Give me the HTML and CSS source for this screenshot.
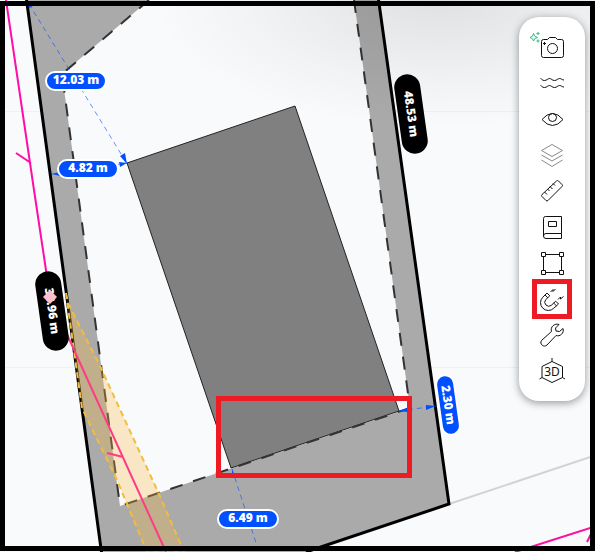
FILE: index.html
```html
<!DOCTYPE html>
<html lang="en">
<head>
  <meta charset="UTF-8">
  <meta name="viewport" content="width=device-width, initial-scale=1.0">
  <title>Site plan</title>
  <link rel="stylesheet" href="styles.css">
</head>
<body>

  <main class="viewer">
    <svg class="plan" viewBox="0 0 595 552" preserveAspectRatio="xMidYMid slice" role="img" aria-label="Plot plan">
      <!-- grid -->
      <path class="grid" d="M0 111.5H595M0 367.5H595"/>
      <path class="road" d="M449 504L595 455.5"/>

      <!-- plot and buildable area -->
      <path class="plot" d="M26 0H379L449 504L310 551L310 560H102Z"/>
      <path class="area" d="M149 0L62 74L120 506L410 408L354 0Z"/>
      <path class="setback" d="M149 0L62 74L120 506"/>
      <path class="setback" d="M354 0L410 408"/>
      <path class="building" d="M127 163L295 106L399 411L231 468Z"/>
      <path class="setback" d="M410 408L120 506"/>
      <path class="border" d="M26 -4L102 556M378 -4L449 504L306 552"/>

      <!-- easement -->
      <path class="easement" d="M66 293L76 365L82 408L117 480L147 552H184L159 494L100 366L68 303Z"/>
      <path class="pipe" d="M6 0L34 190L50 297M16 153L31 163M515 552L595 526.5M587 542L591 534"/>
      <path class="pipe pipe-in" d="M50 297L166 552M107 453L123 457"/>

      <!-- distances -->
      <path class="distance" d="M29 4L126 162M52 174L127 163M399 411L436 406M232 469L259 552"/>
      <path class="arrow" d="M127 164L120 156L125 153ZM127 163L119 162L120 167ZM52 174L60 172V176ZM399 411L407 408V412ZM436 406L426 405V410ZM232 469L232 478L235 478ZM28 3L29 8L33 6Z"/>

      <g class="tag" transform="translate(76 81)">
        <rect x="-30" y="-9" width="60" height="18" rx="9"/>
        <text y="3">12.03 m</text>
      </g>
      <g class="tag" transform="translate(88 169)">
        <rect x="-30" y="-9" width="60" height="18" rx="9"/>
        <text y="3">4.82 m</text>
      </g>
      <g class="tag" transform="translate(248 519)">
        <rect x="-30" y="-9" width="60" height="18" rx="9"/>
        <text y="3">6.49 m</text>
      </g>
      <g class="tag" transform="translate(448 405) rotate(82)">
        <rect x="-30" y="-9" width="60" height="18" rx="9"/>
        <text y="4">2.30 m</text>
      </g>
      <g class="tag tag-side" transform="translate(411 114) rotate(82)">
        <rect x="-40" y="-13" width="80" height="26" rx="13"/>
        <text y="4">48.53 m</text>
      </g>
      <g class="tag tag-side" transform="translate(52 311) rotate(82)">
        <rect x="-40" y="-13" width="80" height="26" rx="13"/>
        <text y="4">38.96 m</text>
      </g>
      <path class="marker" d="M50 290L57 297L50 304L43 297Z"/>

      <rect class="focus" x="218.5" y="398.5" width="191" height="77"/>
    </svg>

    <div class="shade"></div>

    <nav class="toolbar" aria-label="Tools">
      <button class="tool" type="button" aria-label="Snapshot">
        <svg viewBox="0 0 24 24">
          <path d="M3.5 4.5H7.5L9.5 2.5H15.5L17.5 4.5H21.5Q23.5 4.5 23.5 6.5V20.5Q23.5 22.5 21.5 22.5H3.5Q1.5 22.5 1.5 20.5V6.5Q1.5 4.5 3.5 4.5Z"/>
          <circle cx="12.5" cy="13.5" r="5"/>
          <path d="M4.5 7V10M3 8.5H6"/>
          <path class="spark" d="M-6.5 -1.5Q-6 2 -2.5 2.5Q-6 3 -6.5 6Q-7 3 -10 2.5Q-7 2 -6.5 -1.5ZM-2 -3V0M-3.5 -1.5H-.5M-2 4.5V7.5M-3.5 6H-.5"/>
        </svg>
      </button>
      <button class="tool" type="button" aria-label="Terrain">
        <svg viewBox="0 0 24 24">
          <path d="M.5 7.5C2 8 2 9.5 4.5 9.5S7.5 7.5 9.5 7.5S12 9.5 14.5 9.5S17.5 7.5 19.5 7.5S22 9 24 9M.5 14.5C2 15 2 16.5 4.5 16.5S7.5 14.5 9.5 14.5S12 16.5 14.5 16.5S17.5 14.5 19.5 14.5S22 16 24 16"/>
        </svg>
      </button>
      <button class="tool" type="button" aria-label="Visibility">
        <svg viewBox="0 0 24 24">
          <path d="M2 12.5Q7 6.5 12.5 6.5T23 12.5Q18 18.5 12.5 18.5T2 12.5Z"/>
          <circle cx="12.5" cy="10.5" r="4"/>
        </svg>
      </button>
      <button class="tool tool-muted" type="button" aria-label="Layers">
        <svg viewBox="0 0 24 24">
          <path d="M12 1.5L22.5 7.5L12 13.5L1.5 7.5ZM1.5 12L12 18L22.5 12M1.5 17L12 23.5L22.5 17"/>
        </svg>
      </button>
      <button class="tool" type="button" aria-label="Measure">
        <svg viewBox="0 0 24 24">
          <path d="M16.5 2Q17.5 1 18.5 2L22 5.5Q23 6.5 22 7.5L8 21.5Q7 22.5 6 21.5L2 17.5Q1 16.5 2 15.5ZM4.5 13L7 15.5M7.5 10L9.5 12M10 7.5L12.5 10M13 4.5L15 6.5"/>
        </svg>
      </button>
      <button class="tool" type="button" aria-label="Library">
        <svg viewBox="0 0 24 24">
          <path d="M21.5 18.5V1.5H5.5Q3.5 1.5 3.5 3.5V21Q3.5 23.5 6 23.5H21.5V18.5H6Q3.5 18.5 3.5 21M8.5 6.5H16.5V11.5H8.5Z"/>
        </svg>
      </button>
      <button class="tool" type="button" aria-label="Area">
        <svg viewBox="0 0 24 24">
          <path d="M5.5 3.5H19.5M5.5 21.5H19.5M3.5 5.5V19.5M21.5 5.5V19.5M1.5 1.5H5.5V5.5H1.5ZM19.5 1.5H23.5V5.5H19.5ZM1.5 19.5H5.5V23.5H1.5ZM19.5 19.5H23.5V23.5H19.5Z"/>
        </svg>
      </button>
      <button class="tool tool-active" type="button" aria-label="Snapping">
        <svg viewBox="0 0 24 24">
          <path d="M7 6L2.8 10.2A7.5 7.5 0 0 0 13.8 21.2L18.5 17L15.7 14.2L11.2 18.4A4 4 0 0 1 5.6 12.8L9.8 8.8ZM5 8L7.8 10.8M13.7 16.1L16.5 18.9"/>
          <path d="M10.5 5L13 2.5V4.5L15.5 2M18 12.5L20.5 10V12L23.5 9.5"/>
        </svg>
      </button>
      <button class="tool" type="button" aria-label="Settings">
        <svg viewBox="0 0 24 24">
          <path d="M19 1.5L15.5 5L16 8L19.5 8.5L23 5.5C24.5 10 20 14 16 12.5L7 22C4 25 -1 21 1.5 17.5L11.5 8.5C10 4 14.5 0 19 1.5Z"/>
        </svg>
      </button>
      <button class="tool" type="button" aria-label="3D view">
        <svg viewBox="0 0 24 24">
          <path d="M12 -1V2.5L22.5 7.5V18.5L12 23.5L2 18.5V7.5L12 2.5M2 18.5L-.5 20M22.5 18.5L25 20"/>
          <text x="12" y="17">3D</text>
        </svg>
      </button>
    </nav>
  </main>

</body>
</html>
```
FILE: styles.css
```css
body {
  margin: 0;
  font-family: "Open Sans", "Noto Sans", sans-serif;
}

.viewer {
  position: relative;
  height: 100vh;
  overflow: hidden;
  background-color: #f8fafc;
}

/* black frame round the map */
.viewer::after {
  content: "";
  position: absolute;
  inset: 1px 0;
  border: 5px solid #000;
  pointer-events: none;
}

.plan {
  display: block;
  width: 100%;
  height: 100%;
  fill: none;
}

.grid {
  stroke: #eef0f2;
}

.road {
  stroke: #d3d3d3;
  stroke-width: 2;
}

.plot {
  fill: #aaa;
}

.area {
  fill: #f9fafc;
}

.setback {
  stroke: #333;
  stroke-width: 2;
  stroke-dasharray: 13 11;
}

.building {
  fill: #808080;
  stroke: #222;
}

.border {
  stroke: #000;
  stroke-width: 3;
}

.easement {
  fill: rgba(248, 184, 65, 0.3);
  stroke: #f2bd3d;
  stroke-width: 2;
  stroke-dasharray: 6 4;
}

.pipe {
  stroke: #ff0da6;
  stroke-width: 2;
}

.pipe-in {
  stroke: #ff3b85;
}

.distance {
  stroke: #0050ff;
  stroke-opacity: 0.6;
  stroke-dasharray: 5 4;
}

.arrow {
  fill: #0050ff;
}

.tag rect {
  fill: #0050ff;
  stroke: #fff;
  stroke-width: 2;
}

.tag text {
  fill: #fff;
  font-size: 12px;
  font-weight: 800;
  text-anchor: middle;
}

.tag-side rect {
  fill: #000;
  stroke: none;
}

.marker {
  fill: #ffc0cb;
}

.focus {
  stroke: #ed1c24;
  stroke-width: 5;
}

.shade {
  position: absolute;
  inset: 0 0 auto 25%;
  height: 130px;
  background: radial-gradient(ellipse at 65% 0, rgba(0, 0, 0, 0.1), rgba(0, 0, 0, 0.03) 45%, rgba(0, 0, 0, 0) 70%);
  pointer-events: none;
}

.toolbar {
  position: absolute;
  top: 17px;
  right: 10px;
  display: flex;
  flex-direction: column;
  align-items: center;
  padding: 12px 15px;
  border-radius: 20px;
  background-color: #fff;
  box-shadow: 0 2px 8px rgba(0, 0, 0, 0.4);
}

.tool {
  display: flex;
  align-items: center;
  justify-content: center;
  width: 36px;
  height: 36px;
  padding: 0;
  border: none;
  background: none;
  cursor: pointer;
}

.tool svg {
  width: 24px;
  height: 24px;
  overflow: visible;
  fill: none;
  stroke: #111;
  stroke-linejoin: round;
}

.tool text {
  fill: #111;
  stroke: none;
  font-family: "Noto Sans", sans-serif;
  font-size: 12px;
  text-anchor: middle;
}

.tool-muted svg {
  stroke: #888;
}

.tool .spark {
  stroke: #2dbd7e;
}

.tool-active {
  outline: 5px solid #ed1c24;
  outline-offset: -3px;
}
```
